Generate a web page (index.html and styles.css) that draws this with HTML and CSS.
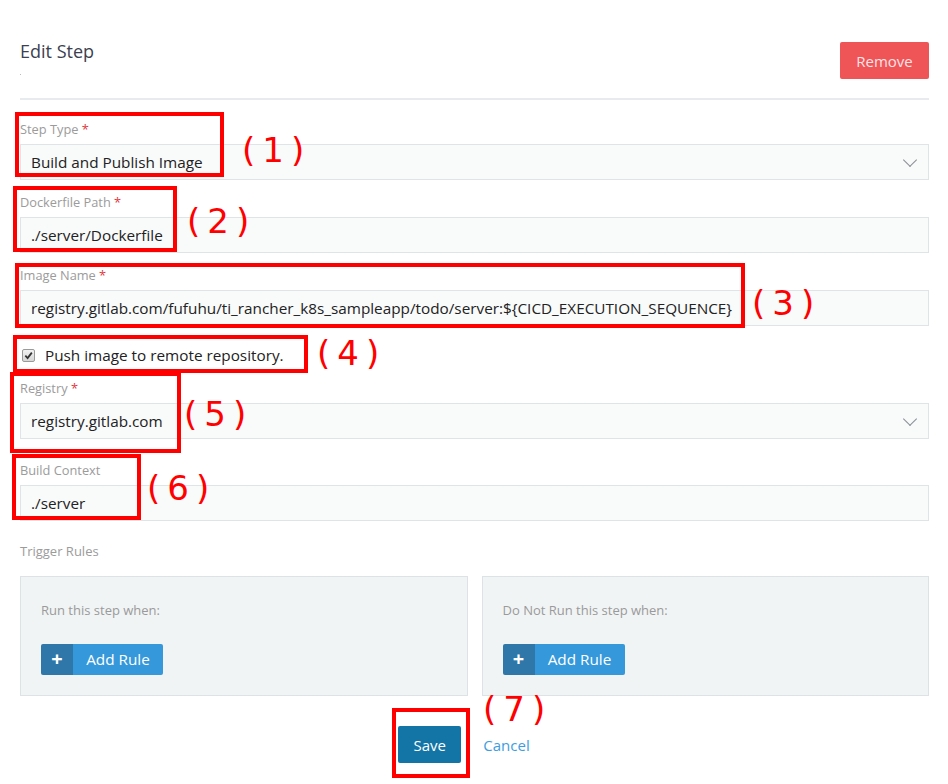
FILE: index.html
```html
<!DOCTYPE html>
<html lang="en">
<head>
    <meta charset="UTF-8">
    <title>Edit Step</title>
    <link rel="stylesheet" href="styles.css">
</head>
<body>
<div class="page">

    <div class="header">
        <div class="title-block">
            <h2>Edit Step</h2>
            <span class="dot"></span>
        </div>
        <button type="button" class="btn-remove">Remove</button>
    </div>

    <div class="form-group">
        <label>Step Type <span class="req">*</span></label>
        <div class="field select">Build and Publish Image<span class="chevron"></span></div>
    </div>

    <div class="form-group">
        <label>Dockerfile Path <span class="req">*</span></label>
        <div class="field">./server/Dockerfile</div>
    </div>

    <div class="form-group">
        <label>Image Name <span class="req">*</span></label>
        <div class="field">registry.gitlab.com/fufuhu/ti_rancher_k8s_sampleapp/todo/server:${CICD_EXECUTION_SEQUENCE}</div>
    </div>

    <div class="check-row">
        <span class="checkbox">
            <svg width="9" height="9" viewBox="0 0 10 10"><path d="M1.5 5.2 L4 7.8 L8.7 1.8" fill="none" stroke="#333" stroke-width="2"/></svg>
        </span>
        Push image to remote repository.
    </div>

    <div class="form-group registry">
        <label>Registry <span class="req">*</span></label>
        <div class="field select">registry.gitlab.com<span class="chevron"></span></div>
    </div>

    <div class="form-group">
        <label>Build Context</label>
        <div class="field">./server</div>
    </div>

    <div class="section-label">Trigger Rules</div>

    <div class="rules">
        <div class="rule-box">
            <p>Run this step when:</p>
            <button type="button" class="btn-add"><span class="plus">+</span><span class="add-text">Add Rule</span></button>
        </div>
        <div class="rule-box">
            <p>Do Not Run this step when:</p>
            <button type="button" class="btn-add"><span class="plus">+</span><span class="add-text">Add Rule</span></button>
        </div>
    </div>

    <div class="actions">
        <button type="button" class="btn-save">Save</button>
        <a href="#" class="cancel">Cancel</a>
    </div>

    <!-- annotations drawn over the form -->
    <div class="mark mark-1"></div>
    <div class="num num-1">(1)</div>
    <div class="mark mark-2"></div>
    <div class="num num-2">(2)</div>
    <div class="mark mark-3"></div>
    <div class="num num-3">(3)</div>
    <div class="mark mark-4"></div>
    <div class="num num-4">(4)</div>
    <div class="mark mark-5"></div>
    <div class="num num-5">(5)</div>
    <div class="mark mark-6"></div>
    <div class="num num-6">(6)</div>
    <div class="mark mark-7"></div>
    <div class="num num-7">(7)</div>
</div>
</body>
</html>
```

FILE: styles.css
```css
body {
    margin: 0;
    font-family: "Open Sans", Lato, sans-serif;
    background-color: #fff;
    color: #222;
}

.page {
    position: relative;
    width: 909px;
    height: 784px;
    padding: 0 19px 0 20px;
    overflow: hidden;
}

.header {
    display: flex;
    justify-content: space-between;
    align-items: flex-start;
    padding-top: 40px;
    height: 58px;
    border-bottom: 2px solid #e8ebed;
    margin-bottom: 21px;
}

.title-block h2 {
    margin: 0;
    font-size: 18px;
    font-weight: normal;
    color: #3b4150;
    line-height: 22px;
}

.dot {
    display: block;
    width: 1px;
    height: 1px;
    margin-top: 12px;
    background-color: #bbb;
}

.btn-remove {
    width: 89px;
    height: 37px;
    margin-top: 2px;
    border: none;
    border-radius: 2px;
    background-color: #ef5456;
    color: #fde3e6;
    font-family: "Open Sans", sans-serif;
    font-size: 15px;
    cursor: pointer;
}

.form-group {
    margin-bottom: 14px;
}

.form-group label {
    display: block;
    font-size: 12.8px;
    line-height: 16px;
    color: #9b9b9b;
    margin-bottom: 7px;
}

.req {
    color: #e2383e;
}

.field {
    position: relative;
    height: 34px;
    line-height: 34px;
    padding: 0 10px;
    border: 1px solid #dfe4e6;
    background-color: #f9fafa;
    font-size: 15.3px;
    color: #222;
    white-space: nowrap;
}

.chevron {
    position: absolute;
    right: 13px;
    top: 10px;
    width: 9px;
    height: 9px;
    border-right: 1px solid #8a8f94;
    border-bottom: 1px solid #8a8f94;
    transform: rotate(45deg);
}

.check-row {
    display: flex;
    align-items: center;
    height: 30px;
    margin-bottom: 10px;
    font-size: 15.3px;
    color: #222;
}

.checkbox {
    display: inline-flex;
    align-items: center;
    justify-content: center;
    width: 11px;
    height: 11px;
    margin: 0 10px 0 2px;
    border: 1px solid #9a9a9a;
    border-radius: 2px;
    background: linear-gradient(#f2f2f2, #d6d6d6);
}

.registry {
    margin-bottom: 23px;
}

.section-label {
    font-size: 13px;
    color: #9b9b9b;
    line-height: 16px;
    margin: 22px 0 17px;
}

.rules {
    display: grid;
    grid-template-columns: 1fr 1fr;
    gap: 14px;
}

.rule-box {
    height: 93px;
    padding: 25px 20px 0;
    border: 1px solid #dde3e5;
    background-color: #f1f4f5;
}

.rule-box p {
    margin: 0 0 26px;
    font-size: 13px;
    line-height: 16px;
    color: #9a9a9a;
}

.btn-add {
    display: flex;
    height: 31px;
    padding: 0;
    border: none;
    border-radius: 2px;
    overflow: hidden;
    font-family: "Open Sans", sans-serif;
    cursor: pointer;
}

.plus {
    width: 32px;
    line-height: 30px;
    background-color: #2e77a8;
    color: #fff;
    font-size: 20px;
    font-weight: bold;
}

.add-text {
    width: 90px;
    line-height: 31px;
    background-color: #3498db;
    color: #fff;
    font-size: 15.3px;
}

.actions {
    display: flex;
    justify-content: center;
    align-items: center;
    gap: 22px;
    margin-top: 30px;
}

.btn-save {
    width: 63px;
    height: 37px;
    border: none;
    border-radius: 2px;
    background-color: #1374a6;
    color: #fff;
    font-family: "Open Sans", sans-serif;
    font-size: 15px;
    cursor: pointer;
}

.cancel {
    padding: 0 21px 0 0;
    margin-top: 0;
    font-size: 15px;
    color: #3d9de0;
    text-decoration: none;
}

.mark {
    position: absolute;
    border: 4px solid #f00;
}

.num {
    position: absolute;
    font-family: "DejaVu Sans", sans-serif;
    font-size: 34px;
    line-height: 34px;
    letter-spacing: 7px;
    color: #f00;
}

.mark-1 { left: 15px; top: 112px; width: 201px; height: 57px; }
.num-1 { left: 242px; top: 133px; }
.mark-2 { left: 13px; top: 186px; width: 156px; height: 58px; }
.num-2 { left: 187px; top: 204px; }
.mark-3 { left: 15px; top: 263px; width: 722px; height: 57px; }
.num-3 { left: 752px; top: 286px; }
.mark-4 { left: 13px; top: 335px; width: 287px; height: 30px; }
.num-4 { left: 317px; top: 336px; }
.mark-5 { left: 10px; top: 372px; width: 163px; height: 73px; }
.num-5 { left: 184px; top: 397px; }
.mark-6 { left: 12px; top: 454px; width: 121px; height: 58px; }
.num-6 { left: 147px; top: 471px; }
.mark-7 { left: 392px; top: 708px; width: 70px; height: 62px; }
.num-7 { left: 483px; top: 692px; }
```
